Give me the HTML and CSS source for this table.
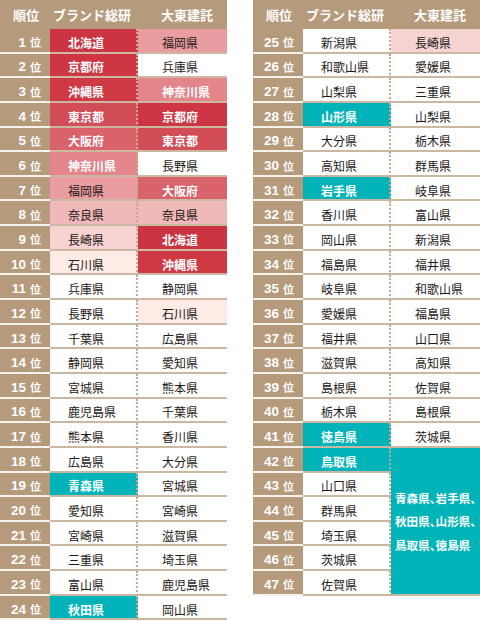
FILE: index.html
```html
<!DOCTYPE html>
<html lang="ja">
<head>
<meta charset="utf-8">
<link rel="stylesheet" href="styles.css">
</head>
<body>
<div class="page">
  <div class="tbl">
    <div class="h hr">順位</div><div class="h hb">ブランド総研</div><div class="h hd">大東建託</div>
    <div class="r"><b>1</b>位</div><div class="b c1">北海道</div><div class="d c7">福岡県</div>
    <div class="r"><b>2</b>位</div><div class="b c2">京都府</div><div class="d">兵庫県</div>
    <div class="r"><b>3</b>位</div><div class="b c3">沖縄県</div><div class="d c6">神奈川県</div>
    <div class="r"><b>4</b>位</div><div class="b c4">東京都</div><div class="d c2">京都府</div>
    <div class="r"><b>5</b>位</div><div class="b c5">大阪府</div><div class="d c4">東京都</div>
    <div class="r"><b>6</b>位</div><div class="b c6">神奈川県</div><div class="d">長野県</div>
    <div class="r"><b>7</b>位</div><div class="b c7">福岡県</div><div class="d c5">大阪府</div>
    <div class="r"><b>8</b>位</div><div class="b c8">奈良県</div><div class="d c8">奈良県</div>
    <div class="r"><b>9</b>位</div><div class="b c9">長崎県</div><div class="d c1">北海道</div>
    <div class="r"><b>10</b>位</div><div class="b c10">石川県</div><div class="d c3">沖縄県</div>
    <div class="r"><b>11</b>位</div><div class="b">兵庫県</div><div class="d">静岡県</div>
    <div class="r"><b>12</b>位</div><div class="b">長野県</div><div class="d c10">石川県</div>
    <div class="r"><b>13</b>位</div><div class="b">千葉県</div><div class="d">広島県</div>
    <div class="r"><b>14</b>位</div><div class="b">静岡県</div><div class="d">愛知県</div>
    <div class="r"><b>15</b>位</div><div class="b">宮城県</div><div class="d">熊本県</div>
    <div class="r"><b>16</b>位</div><div class="b">鹿児島県</div><div class="d">千葉県</div>
    <div class="r"><b>17</b>位</div><div class="b">熊本県</div><div class="d">香川県</div>
    <div class="r"><b>18</b>位</div><div class="b">広島県</div><div class="d">大分県</div>
    <div class="r"><b>19</b>位</div><div class="b t">青森県</div><div class="d">宮城県</div>
    <div class="r"><b>20</b>位</div><div class="b">愛知県</div><div class="d">宮崎県</div>
    <div class="r"><b>21</b>位</div><div class="b">宮崎県</div><div class="d">滋賀県</div>
    <div class="r"><b>22</b>位</div><div class="b">三重県</div><div class="d">埼玉県</div>
    <div class="r"><b>23</b>位</div><div class="b">富山県</div><div class="d">鹿児島県</div>
    <div class="r"><b>24</b>位</div><div class="b t">秋田県</div><div class="d">岡山県</div>
  </div>
  <div class="tbl">
    <div class="h hr">順位</div><div class="h hb">ブランド総研</div><div class="h hd">大東建託</div>
    <div class="r"><b>25</b>位</div><div class="b">新潟県</div><div class="d c9">長崎県</div>
    <div class="r"><b>26</b>位</div><div class="b">和歌山県</div><div class="d">愛媛県</div>
    <div class="r"><b>27</b>位</div><div class="b">山梨県</div><div class="d">三重県</div>
    <div class="r"><b>28</b>位</div><div class="b t">山形県</div><div class="d">山梨県</div>
    <div class="r"><b>29</b>位</div><div class="b">大分県</div><div class="d">栃木県</div>
    <div class="r"><b>30</b>位</div><div class="b">高知県</div><div class="d">群馬県</div>
    <div class="r"><b>31</b>位</div><div class="b t">岩手県</div><div class="d">岐阜県</div>
    <div class="r"><b>32</b>位</div><div class="b">香川県</div><div class="d">富山県</div>
    <div class="r"><b>33</b>位</div><div class="b">岡山県</div><div class="d">新潟県</div>
    <div class="r"><b>34</b>位</div><div class="b">福島県</div><div class="d">福井県</div>
    <div class="r"><b>35</b>位</div><div class="b">岐阜県</div><div class="d">和歌山県</div>
    <div class="r"><b>36</b>位</div><div class="b">愛媛県</div><div class="d">福島県</div>
    <div class="r"><b>37</b>位</div><div class="b">福井県</div><div class="d">山口県</div>
    <div class="r"><b>38</b>位</div><div class="b">滋賀県</div><div class="d">高知県</div>
    <div class="r"><b>39</b>位</div><div class="b">島根県</div><div class="d">佐賀県</div>
    <div class="r"><b>40</b>位</div><div class="b">栃木県</div><div class="d">島根県</div>
    <div class="r"><b>41</b>位</div><div class="b t">徳島県</div><div class="d">茨城県</div>
    <div class="r"><b>42</b>位</div><div class="b t">鳥取県</div><div class="d t merged">青森県、岩手県、<br>秋田県、山形県、<br>鳥取県、徳島県</div>
    <div class="r"><b>43</b>位</div><div class="b">山口県</div>
    <div class="r"><b>44</b>位</div><div class="b">群馬県</div>
    <div class="r"><b>45</b>位</div><div class="b">埼玉県</div>
    <div class="r"><b>46</b>位</div><div class="b">茨城県</div>
    <div class="r"><b>47</b>位</div><div class="b">佐賀県</div>
  </div>
</div>
</body>
</html>
```
FILE: styles.css
```css
* { box-sizing: border-box; }
html, body { margin: 0; padding: 0; background: #fff; }
body {
  font-family: "Noto Sans CJK JP", "Noto Sans", sans-serif;
  color: #231815;
  width: 480px;
  height: 621px;
  overflow: hidden;
}
.page {
  display: flex;
  gap: 26px;
  align-items: flex-start;
}
.tbl {
  display: grid;
  grid-template-columns: 50px 88px 89px;
  grid-template-rows: 29px;
  grid-auto-rows: 24.65px;
  width: 227px;
}
.h {
  background: #b69a7c;
  color: #fff;
  font-size: 13px;
  font-weight: 700;
  display: flex;
  align-items: center;
  white-space: nowrap;
}
.hr { padding-left: 13px; }
.hb { padding-left: 3px; }
.hd { padding-left: 23px; }
.r {
  background: #b69a7c;
  color: #fff;
  font-size: 11px;
  font-weight: 700;
  display: flex;
  align-items: center;
  justify-content: flex-end;
  padding: 4px 9px 0 0;
  border-bottom: 2px solid #f7f2ec;
  white-space: nowrap;
}
.r b {
  font-family: "Liberation Sans", Arial, sans-serif;
  font-size: 13.5px;
  font-weight: 700;
  margin-right: 4px;
}
.b, .d {
  font-size: 12px;
  display: flex;
  align-items: center;
  padding-top: 4px;
  border-bottom: 2px solid #cbb7a2;
  white-space: nowrap;
}
.b {
  padding-left: 18px;
  border-right: 2px dotted #c4aa90;
}
.d { padding-left: 24px; }
.c1 { background: #cc3441; color: #fff; font-weight: 700; }
.c2 { background: #cd3642; color: #fff; font-weight: 700; }
.c3 { background: #ce3944; color: #fff; font-weight: 700; }
.c4 { background: #d34d58; color: #fff; font-weight: 700; }
.c5 { background: #da626b; color: #fff; font-weight: 700; }
.c6 { background: #e3858b; color: #fff; font-weight: 700; }
.c7 { background: #e99da1; }
.c8 { background: #f0b9b9; }
.c9 { background: #f6d3d1; }
.c10 { background: #fdece6; }
.t { background: #00b3b8; color: #fff; font-weight: 700; }
.merged {
  grid-row: span 6;
  padding: 2px 0 0 4px;
  font-size: 11.6px;
  line-height: 23.5px;
  font-feature-settings: "halt";
  white-space: nowrap;
}
```
